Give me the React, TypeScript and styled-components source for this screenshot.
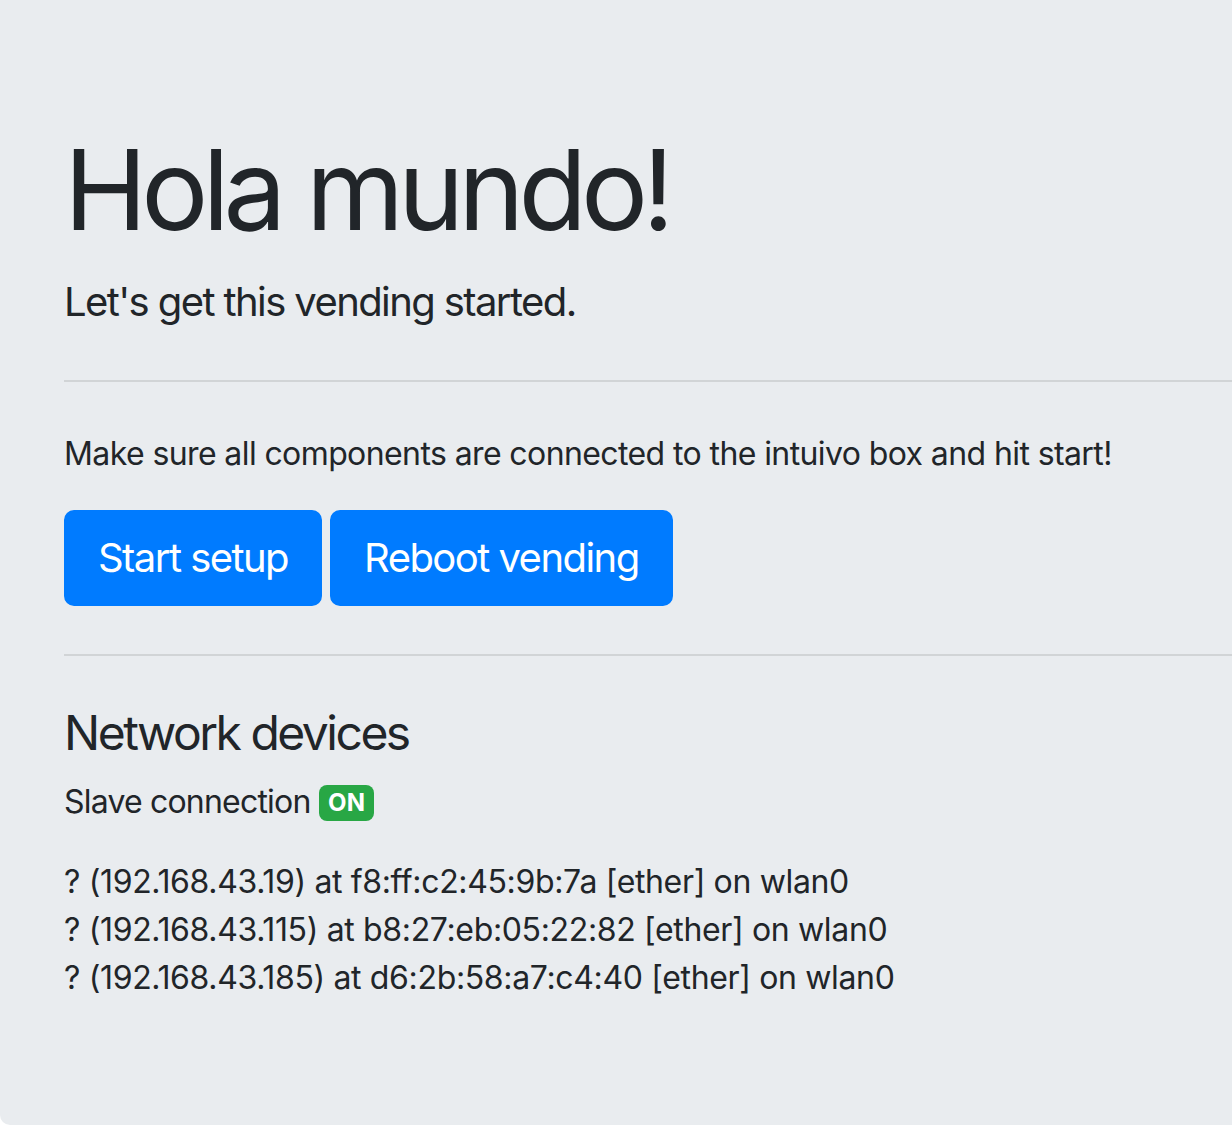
import React from 'react';
import styled, { createGlobalStyle } from 'styled-components';

const GlobalStyle = createGlobalStyle`
  html, body {
    margin: 0;
    padding: 0;
    background: #ffffff;
    overflow: hidden;
  }
  body {
    font-family: Inter, "Noto Sans", "Liberation Sans", sans-serif;
    color: #212529;
  }
`;

const s = {
  Jumbotron: styled.section`
    box-sizing: border-box;
    width: calc(100% + 20px);
    height: 1125px;
    padding: 122px 20px 0 64px;
    background-color: #e9ecef;
    border-radius: 0 0 10px 10px;
  `,
  Display: styled.h1`
    margin: 0 0 16px;
    font-size: 112px;
    font-weight: 400;
    line-height: 1.2;
    letter-spacing: -6px;
  `,
  Lead: styled.p`
    margin: 0 0 32px;
    font-size: 40px;
    font-weight: 400;
    line-height: 1.5;
    letter-spacing: -1.6px;
  `,
  Rule: styled.hr`
    margin: 48px -20px 48px 0;
    border: 0;
    border-top: 2px solid rgba(0, 0, 0, 0.1);
  `,
  Text: styled.p`
    margin: 0 0 32px;
    font-size: 32px;
    line-height: 1.5;
    letter-spacing: -0.6px;
  `,
  Label: styled.span`
    letter-spacing: -0.8px;
  `,
  BtnRow: styled.div`
    display: flex;
    gap: 8px;
  `,
  Button: styled.button`
    height: 96px;
    padding: 0 32px;
    border: 2px solid #007bff;
    border-radius: 10px;
    background-color: #007bff;
    color: #ffffff;
    font-family: inherit;
    font-size: 40px;
    line-height: 1.5;
    letter-spacing: -1.55px;
    cursor: pointer;
  `,
  Heading: styled.h4`
    margin: 0 0 16px;
    font-size: 48px;
    font-weight: 400;
    line-height: 1.2;
    letter-spacing: -2.5px;
  `,
  Badge: styled.span`
    display: inline-block;
    padding: 6px 9px;
    border-radius: 8px;
    background-color: #28a745;
    color: #ffffff;
    font-size: 24px;
    font-weight: 700;
    line-height: 1;
    vertical-align: 2px;
    letter-spacing: 0.2px;
  `,
  DeviceList: styled.div`
    font-size: 32px;
    line-height: 48px;
    letter-spacing: -0.35px;
  `,
};

const devices = [
  '? (192.168.43.19) at f8:ff:c2:45:9b:7a [ether] on wlan0',
  '? (192.168.43.115) at b8:27:eb:05:22:82 [ether] on wlan0',
  '? (192.168.43.185) at d6:2b:58:a7:c4:40 [ether] on wlan0',
];

const App = (): JSX.Element => {
  return (
    <s.Jumbotron>
      <GlobalStyle />
      <s.Display>Hola mundo!</s.Display>
      <s.Lead>Let's get this vending started.</s.Lead>
      <s.Rule />
      <s.Text>Make sure all components are connected to the intuivo box and hit start!</s.Text>
      <s.BtnRow>
        <s.Button>Start setup</s.Button>
        <s.Button>Reboot vending</s.Button>
      </s.BtnRow>
      <s.Rule />
      <s.Heading>Network devices</s.Heading>
      <s.Text>
        <s.Label>Slave connection</s.Label> <s.Badge>ON</s.Badge>
      </s.Text>
      <s.DeviceList>
        {devices.map((d) => (
          <div key={d}>{d}</div>
        ))}
      </s.DeviceList>
    </s.Jumbotron>
  );
};

export default App;
